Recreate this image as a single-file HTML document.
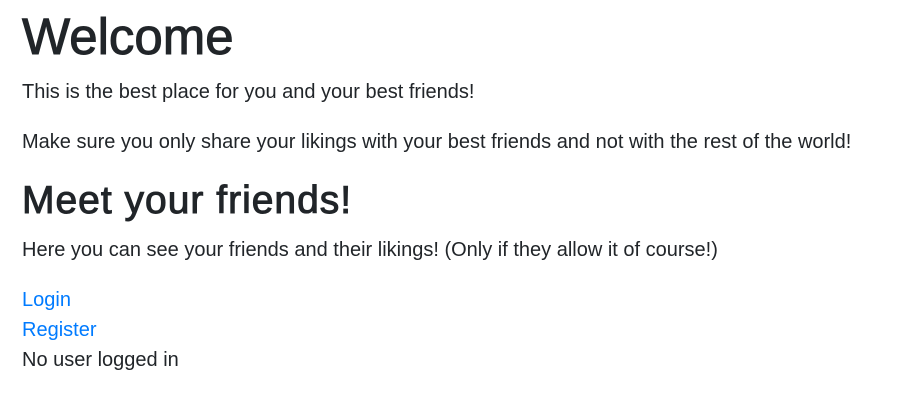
<!DOCTYPE html>
<html><head><meta charset="utf-8"><style>
html,body{margin:0;padding:0;background:#fff;}
body{font-family:"Liberation Sans",sans-serif;color:#212529;font-size:20px;line-height:30px;padding:10px 22px 0;width:898px;overflow:hidden;height:410px;box-sizing:border-box;}
h1{font-size:51px;line-height:60px;margin:-3px 0 10px;font-weight:normal;-webkit-text-stroke:1px #212529;}
h2{font-size:39px;line-height:48px;margin:0 0 10px;font-weight:normal;letter-spacing:1px;-webkit-text-stroke:1px #212529;}
p{margin:0 0 20px;}
a{color:#007bff;text-decoration:none;display:block;}
</style></head><body>
<h1>Welcome</h1>
<p>This is the best place for you and your best friends!</p>
<p>Make sure you only share your likings with your best friends and not with the rest of the world!</p>
<h2>Meet your friends!</h2>
<p>Here you can see your friends and their likings! (Only if they allow it of course!)</p>
<a href="#">Login</a>
<a href="#">Register</a>
<div>No user logged in</div>
</body></html>
